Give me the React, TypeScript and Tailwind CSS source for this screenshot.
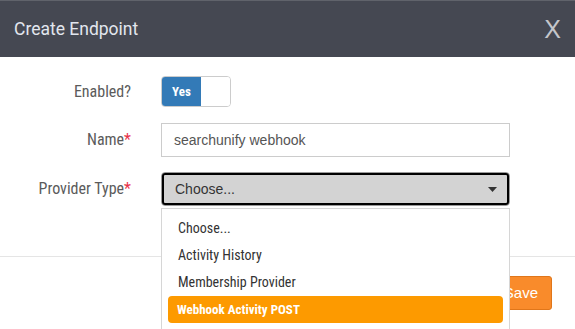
import React from "react";

const cond = "font-['Roboto_Condensed','DejaVu_Sans_Condensed','Liberation_Sans_Narrow',Roboto,sans-serif]";

export default function App() {
  return (
    <div className="relative h-[329px] w-[575px] overflow-hidden bg-white">
      <div className="flex h-[57px] items-center justify-between border-t border-[#60636b] bg-[#454852] pl-[14px] pr-[14px]">
        <div className="font-['Roboto',sans-serif] text-[17.5px] text-[#e2e6ee]">Create Endpoint</div>
        <div className="font-['Liberation_Sans',Arial,sans-serif] text-[25px] leading-none text-[#c4c6cb]">X</div>
      </div>
      <div className="border-b border-[#e5e5e5] pb-[50px] pt-[19px]">
        <div className="grid grid-cols-[131px_349px] items-center gap-x-[30px]">
          <div className={`${cond} text-right text-[16px] text-[#5b5b5b]`}>Enabled?</div>
          <div className="flex h-[31px] w-[70px] overflow-hidden rounded-[4px] border border-[#cccccc]">
            <div className="flex w-[39px] items-center justify-center bg-[#337ab7] font-['Roboto_Condensed',Roboto,sans-serif] text-[13px] font-bold text-white">
              Yes
            </div>
            <div className="flex-1 bg-white" />
          </div>
          <div className={`${cond} mt-[16px] text-right text-[16px] text-[#5b5b5b]`}>
            Name<span className="text-[#e8334a]">*</span>
          </div>
          <div className="mt-[16px] flex h-[34px] items-center border border-[#cccccc] pl-[12px] font-['Liberation_Sans',Arial,sans-serif] text-[14px] text-[#555555]">
            searchunify webhook
          </div>
          <div className={`${cond} mt-[15px] text-right text-[16px] text-[#5b5b5b]`}>
            Provider Type<span className="text-[#e8334a]">*</span>
          </div>
          <div className="mt-[15px] h-[34px] rounded-[4px] border border-[#9a9a9a]">
            <div className="flex h-full items-center justify-between rounded-[3px] border-2 border-black bg-[#d3d3d3] pl-[11px] pr-[10px] font-['Liberation_Sans',Arial,sans-serif] text-[14px] text-[#333333]">
              <span>Choose...</span>
              <svg width="9" height="5" viewBox="0 0 9 5">
                <path d="M0 0 H9 L4.5 5 Z" fill="#333" />
              </svg>
            </div>
          </div>
        </div>
      </div>
      <div className="flex justify-end pr-[23px] pt-[19px]">
        <button className="h-[34px] rounded-[3px] border border-[#e0761a] bg-[#f98b2b] px-[13px] font-['Liberation_Sans',Arial,sans-serif] text-[15px] text-white">
          Save
        </button>
      </div>
      <div className={`${cond} absolute left-[161px] top-[208px] h-[140px] w-[349px] border border-[#d6d6d6] bg-white pt-[6px] text-[14px] text-[#333333]`}>
        <div className="flex h-[27px] items-center pl-[16px]">Choose...</div>
        <div className="flex h-[27px] items-center pl-[16px]">Activity History</div>
        <div className="flex h-[27px] items-center pl-[16px]">Membership Provider</div>
        <div className="ml-[6px] mr-[6px] flex h-[27px] items-center rounded-[4px] bg-[#fd9a00] pl-[9px] text-[13px] font-bold text-white">
          Webhook Activity POST
        </div>
      </div>
    </div>
  );
}
